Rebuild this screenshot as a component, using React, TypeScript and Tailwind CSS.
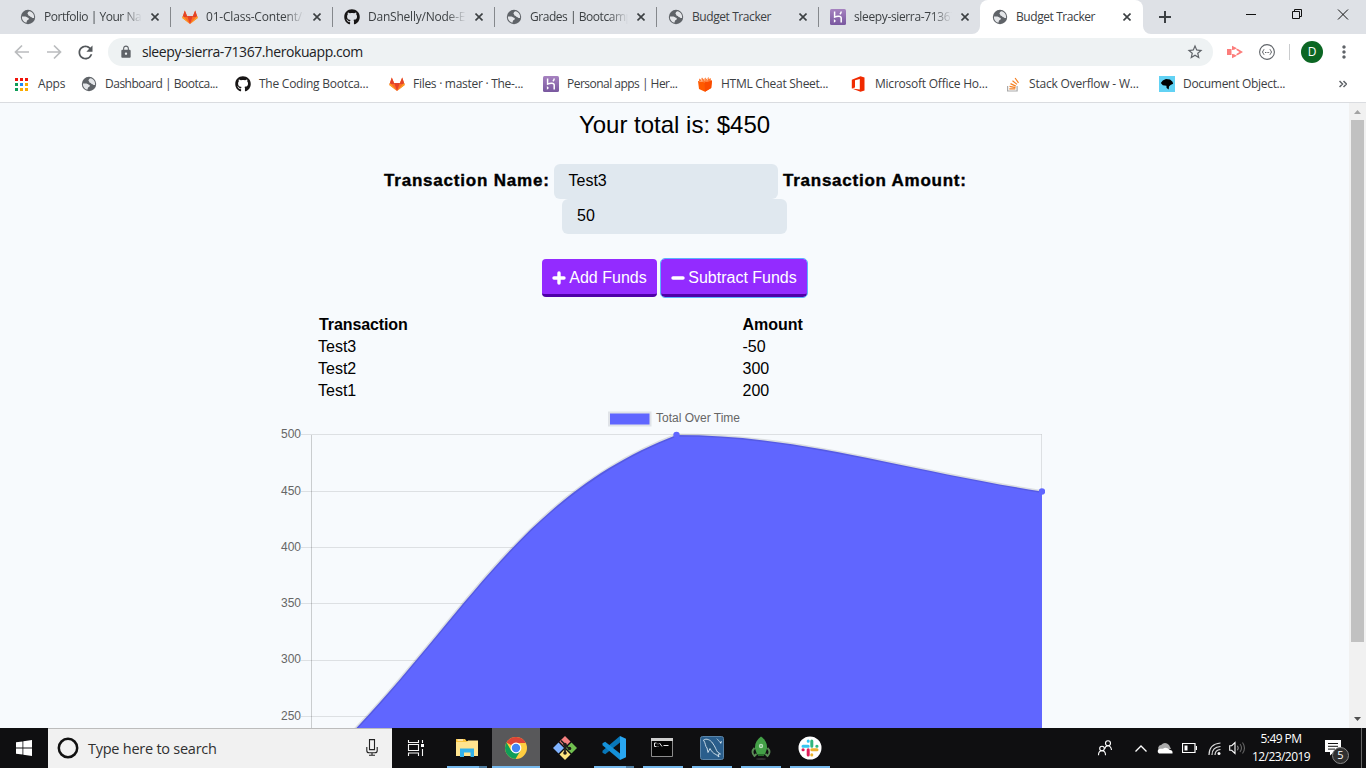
import React from "react";
import { MdLock, MdRefresh, MdStarBorder, MdMoreVert } from "react-icons/md";
import { FaGithub } from "react-icons/fa";

const UI = "font-['Open_Sans','Noto_Sans',sans-serif]";

function GlobeIcon() {
  return (
    <svg viewBox="0 0 16 16" className="h-4 w-4">
      <circle cx="8" cy="8" r="7.200" fill="#5f6368" />
      <path d="M9.300 2.300C7.800 2.700 7.900 4 7.400 4.700 8.400 5.300 8 6.300 9 6.800c1.200.3 1.200 1.500 2.400 1.500.6 0 .8 1 2.700.7C14.500 5.500 12.500 2.800 9.300 2.300z" fill="#e4e6e9" />
      <path d="M1.900 7.400c1.600.3 3.400-.3 4.700.7.900.8 2.400.6 2.300 2-.3 1-1.600.8-1.900 1.700-.3.700-.2 1.500-.7 2C3.500 13 1.700 10.500 1.900 7.400z" fill="#e4e6e9" />
    </svg>
  );
}

function GithubIcon() {
  return <FaGithub className="h-4 w-4 text-[#171515]" />;
}

function GitlabIcon() {
  return (
    <svg viewBox="0 0 16 16" className="h-4 w-4">
      <path d="M8 15 .3 9 2.800 1.500 5.200 7h5.600l2.400-5.500L15.700 9z" fill="#fc6d26" />
      <path d="M2.800 1.500.6 8h4.700zM13.200 1.500 15.400 8h-4.700z" fill="#e24329" />
      <path d="M8 15 .3 9l.6-2zM8 15l7.700-6-.6-2z" fill="#fca326" />
      <path d="M8 15 5.200 7h5.600z" fill="#e24329" />
    </svg>
  );
}

function HerokuIcon() {
  return (
    <svg viewBox="0 0 16 16" className="h-4 w-4">
      <defs>
        <linearGradient id="hk" x1="0" y1="0" x2="0" y2="1">
          <stop offset="0" stopColor="#a682c0" />
          <stop offset="1" stopColor="#79589f" />
        </linearGradient>
      </defs>
      <rect width="16" height="16" rx="1.500" fill="url(#hk)" />
      <path d="M4.600 2.500v5.600c2.200-1 6.600-1.500 6.600 1v4.400M11.200 2.500c0 1.200-.5 2-1.300 2.800" stroke="#fff" strokeWidth="1.500" fill="none" />
      <path d="M3.900 10v3.700L6 11.900z" fill="#fff" />
    </svg>
  );
}

function CheatSheetIcon() {
  return (
    <svg viewBox="0 0 16 16" className="h-4 w-4">
      <path d="m1 5 6.500 1.300L15 4.500 14.200 12 8 15.700 2 13z" fill="#ff5a00" />
      <path d="m7.500 6.200 7.500-1.700-.8 7.500L8 15.700z" fill="#fa4b00" />
      <path d="m2 5 .2-2.500 1.600 1L5 1.500 6.800 3.500l1.500-2 1.300 1.700L11.500 1l.5 2 1.700-1L14 5l-6.500 1.200z" fill="#ff7a32" />
      <path d="m4 2.500 1 2.500M7.800 2.500v2.200M11 2l-1 2.500" stroke="#fff" strokeWidth=".6" />
    </svg>
  );
}

function OfficeIcon() {
  return (
    <svg viewBox="0 0 16 16" className="h-4 w-4">
      <path fillRule="evenodd" d="M.8 3.800 9.500.2 13.500 1.400v13.200L9.500 15.800.8 12.600l8 1V3L4 4.200v7.200l-3.200 1.200z" fill="#f02a00" />
    </svg>
  );
}

function StackIcon() {
  return (
    <svg viewBox="0 0 16 16" className="h-4 w-4" fill="none">
      <path d="M2.600 10v5h9.500v-5" stroke="#a9a9a9" strokeWidth="1.200" />
      <path d="M4.300 12.900h6M4.500 10.400l6 1.200M5.500 7.600l5.300 2.500M7.500 4.700l4.500 3.700M10.100 2l3.400 4.900" stroke="#f48024" strokeWidth="1.200" />
    </svg>
  );
}

function DocumentIcon() {
  return (
    <svg viewBox="0 0 16 16" className="h-4 w-4">
      <path d="M0 0h16v16H0z" fill="#62d2f4" />
      <path d="m1.800 7 2-2.500L7 3l4 .5 2.500 2.300.6 2-2.600 1.200-1.500 1.500-.3 3L7.600 12l-.2-2.200-3.600-.6z" fill="#000" />
    </svg>
  );
}

function AppsIcon() {
  const colors = ["#f0140a", "#f0140a", "#f0140a", "#0f9d58", "#1e88f5", "#fbab00", "#0f9d58", "#fbab00", "#fbab00"];
  return (
    <svg viewBox="0 0 13 13" className="h-[13px] w-[13px]">
      {colors.map((c, i) => (
        <rect key={i} x={(i % 3) * 5} y={Math.floor(i / 3) * 5} width="3" height="3" fill={c} />
      ))}
    </svg>
  );
}

function Cross() {
  return (
    <svg viewBox="0 0 8 8" className="h-2 w-2 shrink-0 text-[#3c4043]">
      <path d="m.5.5 7 7m0-7-7 7" stroke="currentColor" strokeWidth="1.600" />
    </svg>
  );
}

const tabs = [
  { icon: <GlobeIcon />, title: "Portfolio | Your Nam", fade: true, sep: true, spacing: "tracking-[-0.46px]" },
  { icon: <GitlabIcon />, title: "01-Class-Content/19", fade: true, sep: true, spacing: "tracking-[-0.2px]" },
  { icon: <GithubIcon />, title: "DanShelly/Node-Ex", fade: true, sep: true, spacing: "tracking-[-0.22px]" },
  { icon: <GlobeIcon />, title: "Grades | Bootcamp", fade: true, sep: true, spacing: "tracking-[-0.46px]" },
  { icon: <GlobeIcon />, title: "Budget Tracker", fade: false, sep: true, spacing: "tracking-[-0.42px]" },
  { icon: <HerokuIcon />, title: "sleepy-sierra-71367", fade: true, sep: false, spacing: "tracking-[-0.36px]" },
];

function TabStrip() {
  return (
    <div className="flex h-[34px] bg-[#dee1e6] pl-2 text-[12px]">
      {tabs.map((t, i) => (
        <div key={i} className="relative flex h-[34px] w-[162px] shrink-0 items-center pl-3 pr-[11px] text-[#3c4043]">
          <span className="shrink-0">{t.icon}</span>
          <span
            className={
              "ml-2 w-[98px] overflow-hidden whitespace-nowrap " +
              t.spacing +
              (t.fade ? " [mask-image:linear-gradient(to_right,#000_80%,transparent_100%)]" : "")
            }
          >
            {t.title}
          </span>
          <span className="ml-[9px]"><Cross /></span>
          {t.sep && <span className="absolute -right-px top-[7px] h-5 w-px bg-[#85888c]" />}
        </div>
      ))}
      <div className="relative flex h-[34px] w-[163px] shrink-0 items-center rounded-t-lg bg-white pl-3 pr-[11px] text-[#3c4043]">
        <svg viewBox="0 0 8 8" className="absolute -left-2 bottom-0 h-2 w-2"><path d="M8 0v8H0a8 8 0 0 0 8-8" fill="#fff" /></svg>
        <svg viewBox="0 0 8 8" className="absolute -right-2 bottom-0 h-2 w-2"><path d="M0 0v8h8a8 8 0 0 1-8-8" fill="#fff" /></svg>
        <GlobeIcon />
        <span className="ml-2 w-[98px] whitespace-nowrap tracking-[-0.42px]">Budget Tracker</span>
        <span className="ml-[9px]"><Cross /></span>
      </div>
      <svg viewBox="0 0 12 12" className="ml-[16px] mt-[11px] h-3 w-3"><path d="M6 0v12M0 6h12" stroke="#3c4043" strokeWidth="2" /></svg>
      <svg viewBox="0 0 110 12" className="ml-[75px] mt-2 h-3 w-[110px] overflow-visible" fill="none" stroke="#111" strokeWidth="1">
        <path d="M0 6.500h10M46.500 3.500h7v7h-7zM48.500 3.500v-2h7v7h-2M92 1.500l10 10m0-10-10 10" />
      </svg>
    </div>
  );
}

function Toolbar() {
  return (
    <div className="flex h-[36px] items-center bg-white pl-[14px]">
      <svg viewBox="0 0 48 16" className="h-4 w-12" fill="none" stroke="#babcbe" strokeWidth="1.700">
        <path d="M15 8H2M8 1.500 1.500 8 8 14.500M33 8h13M40 1.500 46.500 8 40 14.500" />
      </svg>
      <MdRefresh className="ml-[13px] h-[21px] w-[21px] text-[#54585c]" />
      <div className="ml-3 flex h-7 w-[1105px] items-center rounded-full bg-[#eef2f3] pl-[11px] pr-[9px]">
        <MdLock className="h-[14px] w-[14px] text-[#5f6368]" />
        <span className="mb-px ml-[9px] flex-1 whitespace-nowrap text-[14px] tracking-[-0.42px] text-[#202124]">sleepy-sierra-71367.herokuapp.com</span>
        <MdStarBorder className="h-[18px] w-[18px] text-[#5f6368]" />
      </div>
      <svg viewBox="0 0 16 14" className="ml-[14px] h-[14px] w-4" fill="#fc7d7b">
        <path d="M0 4h4.500v6H0zM5 .8l5 2.400-3 1.600-2 .2zM10.500 3.700 16 7l-5.500 3.300-1.500-1L12.500 7 9 4.700zM5 13.200l5-2.400-3-1.600-2-.2z" />
      </svg>
      <svg viewBox="0 0 16 16" className="ml-[16px] h-4 w-4" fill="none" stroke="#5f6368">
        <circle cx="8" cy="8" r="7.400" strokeWidth="1.100" />
        <path d="M5.300 5.500Q4.300 5.500 4.300 6.600T3.200 8Q4.300 8.300 4.300 9.400T5.300 10.500M10.700 5.500q1 0 1 1.100T12.800 8q-1.100.3-1.100 1.400t-1 1.100" />
        <path d="M6 8.500h1M7.600 8.500h1M9.200 8.500h1" />
      </svg>
      <span className="ml-[14px] h-4 w-px bg-[#caccce]" />
      <span className="ml-[11px] flex h-[22px] w-[22px] items-center justify-center rounded-full bg-[#0b6623] text-[12px] text-white">D</span>
      <MdMoreVert className="ml-[11px] h-[20px] w-[20px] shrink-0 text-[#5f6368]" />
    </div>
  );
}

const bookmarks = [
  { icon: <GlobeIcon />, title: "Dashboard | Bootca...", spacing: "tracking-[-0.5px]" },
  { icon: <GithubIcon />, title: "The Coding Bootca...", spacing: "tracking-[-0.25px]" },
  { icon: <GitlabIcon />, title: "Files · master · The-...", spacing: "tracking-[-0.28px]" },
  { icon: <HerokuIcon />, title: "Personal apps | Her...", spacing: "tracking-[-0.52px]" },
  { icon: <CheatSheetIcon />, title: "HTML Cheat Sheet...", spacing: "tracking-[-0.28px]" },
  { icon: <OfficeIcon />, title: "Microsoft Office Ho...", spacing: "tracking-[-0.23px]" },
  { icon: <StackIcon />, title: "Stack Overflow - W...", spacing: "tracking-[-0.2px]" },
  { icon: <DocumentIcon />, title: "Document Object...", spacing: "tracking-[-0.3px]" },
];

function Bookmarks() {
  return (
    <div className="flex h-[33px] items-start border-b border-[#dadce0] bg-white pl-[15px] text-[12px] text-[#3c4043]">
      <div className="flex h-7 w-[66px] items-center gap-[10px]">
        <AppsIcon />
        <span className="tracking-[-0.2px]">Apps</span>
      </div>
      {bookmarks.map((b) => (
        <div key={b.title} className="flex h-7 w-[154px] shrink-0 items-center gap-2">
          {b.icon}
          <span className={"whitespace-nowrap " + b.spacing}>{b.title}</span>
        </div>
      ))}
      <svg viewBox="0 0 8 8" className="ml-[26px] mt-[10px] h-2 w-2" fill="none" stroke="#5f6368" strokeWidth="1.500">
        <path d="m.5 1 3 3-3 3M4.500 1l3 3-3 3" />
      </svg>
    </div>
  );
}

const rows = [
  ["Test3", "-50"],
  ["Test2", "300"],
  ["Test1", "200"],
];

const ticks = [
  [500, 24.5],
  [450, 81.5],
  [400, 137.5],
  [350, 193.5],
  [300, 250.5],
  [250, 306.5],
];

function Chart() {
  return (
    <svg viewBox="0 0 770 318" className="h-[318px] w-[770px] font-['Liberation_Sans',Arial,sans-serif] text-[12px]">
      <g stroke="#000" strokeOpacity=".1">
        {ticks.map(([v, y]) => (
          <path key={v} d={`M26 ${y}H766.500`} />
        ))}
        <path d="M766.500 24V318" />
      </g>
      <path d="M36.500 25V318" stroke="#000" strokeOpacity=".18" />
      <g fill="#666" textAnchor="end">
        {ticks.map(([v, y]) => (
          <text key={v} x="26" y={y === 250.5 ? 253 : y + 3.5}>{v}</text>
        ))}
      </g>
      <path d="M36 363C182 227.600 233.800 89.200 401.500 25C526 25 620.800 58.400 767 81.500V363z" fill="#6066ff" />
      <path d="M36 363C182 227.600 233.800 89.200 401.500 25C526 25 620.800 58.400 767 81.500" fill="none" stroke="#000" strokeOpacity=".11" strokeWidth="3" />
      <circle cx="401.500" cy="25" r="3.200" fill="#6066ff" />
      <circle cx="767" cy="81.500" r="3.200" fill="#6066ff" />
      <rect x="334" y="2.500" width="41.500" height="13" fill="#6066ff" stroke="#e0e3e8" strokeWidth="2" />
      <text x="381" y="12" fill="#666">Total Over Time</text>
    </svg>
  );
}

function Page() {
  return (
    <div className="flex h-[625px] overflow-hidden bg-[#f7fafd] font-['Liberation_Sans',Arial,sans-serif] text-[16px] text-black">
      <main className="flex w-[1349px] flex-col items-center">
        <h1 className="mt-[4px] h-9 text-[24px] leading-9">Your total is: $450</h1>
        <div className="mt-[21px] flex h-[35px] items-center">
          <b className="w-[170px] whitespace-nowrap pb-[2px] pl-[0.5px] text-[17px] tracking-[0.8px] [-webkit-text-stroke:0.4px_#000]">Transaction Name:</b>
          <div className="flex h-[35px] w-[224px] items-center rounded-md bg-[#e0e8ef] pl-[15px]">
            <span className="-mt-[2px]">Test3</span>
          </div>
          <b className="ml-[5px] w-[183px] whitespace-nowrap pb-[2px] pl-[0.5px] text-[17px] tracking-[0.75px] [-webkit-text-stroke:0.4px_#000]">Transaction Amount:</b>
        </div>
        <div className="flex h-[35px] w-[225px] items-center rounded-md bg-[#e0e8ef] pl-[15px]">
          <span className="-mt-[2px]">50</span>
        </div>
        <div className="mt-[25px] flex gap-1">
          <button className="flex h-[38px] w-[115px] items-center justify-center gap-[3px] whitespace-nowrap rounded border-b-[3px] border-[#4f00a8] bg-[#932bff] pt-[3px] text-white">
            <svg viewBox="0 0 14 14" className="mb-px h-[14px] w-[14px]"><path d="M7 2v10M2 7h10" stroke="#fff" strokeWidth="3.400" strokeLinecap="round" /></svg>
            Add Funds
          </button>
          <button className="flex h-[38px] w-[146px] items-center justify-center gap-[3px] whitespace-nowrap rounded border-b-[3px] border-[#4f00a8] bg-[#932bff] pt-[3px] text-white outline outline-[#5cb0ff]">
            <svg viewBox="0 0 14 14" className="mb-px h-[14px] w-[14px]"><path d="M2 7h10" stroke="#fff" strokeWidth="3.400" strokeLinecap="round" /></svg>
            Subtract Funds
          </button>
        </div>
        <div className="mt-[17px] grid w-[713px] grid-cols-[424px_1fr] leading-[22px]">
          <b className="pl-px tracking-[-0.1px]">Transaction</b>
          <b className="pl-[0.5px]">Amount</b>
          {rows.map(([name, amount]) => (
            <React.Fragment key={name}>
              <span>{name}</span>
              <span className="pl-[0.5px]">{amount}</span>
            </React.Fragment>
          ))}
        </div>
        <div className="mt-2 h-[318px] w-[799px]">
          <Chart />
        </div>
      </main>
      <div className="flex w-[17px] flex-col items-center bg-[#f1f1f1]">
        <svg viewBox="0 0 7 4" className="mt-[7px] h-1 w-[7px]"><path d="M0 4 3.500 0 7 4z" fill="#a3a3a3" /></svg>
        <div className="mt-[6px] h-[522px] w-[13px] bg-[#c1c1c1]" />
        <svg viewBox="0 0 7 4" className="mt-[75px] h-1 w-[7px]"><path d="M0 0h7L3.500 4z" fill="#505050" /></svg>
      </div>
    </div>
  );
}

function FolderIcon() {
  return (
    <svg viewBox="0 0 24 24" className="h-6 w-6">
      <path d="M1 3h9l1.500 2H22v15H1z" fill="#f9c440" />
      <path d="M1 6h11l1-1.500h10V20H1z" fill="#ffe48f" />
      <path d="M2.500 4H8" stroke="#fff" />
      <path d="M5 12.500h14V21h-3.500v-4.500H9V21H5z" fill="#32b1ea" />
    </svg>
  );
}

function ChromeIcon() {
  return (
    <svg viewBox="0 0 24 24" className="h-6 w-6">
      <circle cx="12" cy="12" r="11" fill="#ffcd40" />
      <path d="M12 12 2.500 6.500A11 11 0 0 1 21.700 7H12z" fill="#db4437" />
      <path d="M2.500 6.500A11 11 0 0 0 11.500 23l5-8.500L12 17l-4.800-2.300z" fill="#0f9d58" />
      <circle cx="12" cy="12" r="5.400" fill="#fff" />
      <circle cx="12" cy="12" r="4.200" fill="#4285f4" />
    </svg>
  );
}

function GitIcon() {
  return (
    <svg viewBox="0 0 24 24" className="h-6 w-6">
      <path d="m12 0 5.500 5.400L12 10.900 6.500 5.400z" fill="#f58080" />
      <path d="m5.500 6.500 5.500 5.500-5.500 5.500L0 12z" fill="#80b3ff" />
      <path d="m18.500 6.500L24 12l-5.500 5.500L13 12z" fill="#71c050" />
      <path d="m12 13.100 5.500 5.500L12 24l-5.500-5.400z" fill="#ffe680" />
      <path d="m8 4.500 4 4v8M12 8.500l4 4" stroke="#201c19" strokeWidth="1.700" fill="none" />
      <circle cx="12" cy="8.500" r="1.800" fill="#201c19" /><circle cx="16.500" cy="12.500" r="1.800" fill="#201c19" /><circle cx="12" cy="17" r="1.800" fill="#201c19" />
    </svg>
  );
}

function CodeIcon() {
  return (
    <svg viewBox="0 0 24 24" className="h-6 w-6">
      <path d="m18 0 6 2.800v18.400L18 24z" fill="#29a7f2" />
      <path d="M18 0v6.500L3.200 18.300.5 16.700v-1.900z" fill="#0877b9" />
      <path d="M18 24v-6.500L3.200 5.700.5 7.300v1.900z" fill="#1591d9" />
    </svg>
  );
}

function TerminalIcon() {
  return (
    <svg viewBox="0 0 24 24" className="h-6 w-6">
      <path d="M.5 2.500h21v18H.5z" fill="#050505" stroke="#8c8c8c" />
      <path d="M0 2h22v3H0z" fill="#cfcfcf" />
      <path d="M5.500 7h-2v3.500h2M7 7.500v.8m0 1.700v.6M8.500 7l2.500 3.500M12.500 9.500h5" stroke="#e8e8e8" fill="none" />
    </svg>
  );
}

function WorkbenchIcon() {
  return (
    <svg viewBox="0 0 24 24" className="h-6 w-6">
      <rect x=".5" y=".5" width="23" height="23" rx="2" fill="#2a5e8c" stroke="#5a84a8" />
      <path d="M3.500 4c3-2 7 0 9 3 3 4 3.500 7 5 9l3 2-2.500.2 1 2.800-3-2.500c-3-1-5-4-6-6L8 16.500 7 12C5 10 6 8 3.500 4z" fill="#28587f" stroke="#d5e5f0" strokeWidth=".9" />
      <path d="m16 2 2 1.500L20 6l2-1-1 3-2-2.500z" fill="#dce8f0" />
    </svg>
  );
}

function RobotIcon() {
  return (
    <svg viewBox="0 0 24 24" className="h-6 w-6">
      <path d="M5.500 12c-3 3-2 6 0 8l2-2M18.500 12c3 3 2 6 0 8l-2-2" fill="none" stroke="#5b8d57" strokeWidth="1.800" />
      <path d="M12 .5c4 3 6.500 7 6 12l-2 6H8l-2-6c-.5-5 2-9 6-12z" fill="#43a047" />
      <circle cx="12" cy="10" r="2.200" fill="#b9dfbb" /><circle cx="12" cy="10" r="1" fill="#6fb673" />
      <path d="M9 18h6v2H9z" fill="#286b2b" /><ellipse cx="12" cy="23" rx="5" ry=".8" fill="#3b3b3b" />
    </svg>
  );
}

function SlackIcon() {
  return (
    <svg viewBox="0 0 24 24" className="h-6 w-6" strokeWidth="3" strokeLinecap="round">
      <circle cx="12" cy="12" r="11.500" fill="#fff" />
      <path d="M10.200 5v.2M5 10.200h5.200" stroke="#36c5f0" /><path d="M19 10.200h-.2M13.800 5v5.200" stroke="#2eb67d" />
      <path d="M13.800 19v-.2M13.800 13.800H19" stroke="#ecb22e" /><path d="M5 13.800h.2M10.200 13.800V19" stroke="#e01e5a" />
    </svg>
  );
}

const taskApps = [
  { icon: <FolderIcon />, line: true, multi: true, active: false },
  { icon: <ChromeIcon />, line: true, multi: false, active: true },
  { icon: <GitIcon />, line: false, multi: false, active: false },
  { icon: <CodeIcon />, line: true, multi: true, active: false },
  { icon: <TerminalIcon />, line: true, multi: false, active: false },
  { icon: <WorkbenchIcon />, line: true, multi: false, active: false },
  { icon: <RobotIcon />, line: true, multi: false, active: false },
  { icon: <SlackIcon />, line: true, multi: false, active: false },
];

function Taskbar() {
  return (
    <div className="flex h-10 bg-[#0f0f11] text-white">
      <div className="flex w-12 items-center justify-center">
        <svg viewBox="0 0 16 16" className="h-4 w-4" fill="#fff"><path d="m0 2.300 6.500-.9v6.100H0zM7.300 1.300 16 0v7.500H7.300zM0 8.400h6.500v6.200L0 13.700zM7.300 8.400H16V16l-8.700-1.200z" /></svg>
      </div>
      <div className="flex w-[344px] items-center border-t border-[#bcbcbc] bg-[#f1f1f1] pl-[9px] pr-[14px]">
        <svg viewBox="0 0 22 22" className="mb-px h-[22px] w-[22px]"><circle cx="11" cy="11" r="9.200" fill="none" stroke="#111" strokeWidth="2.500" /></svg>
        <span className="ml-[9px] flex-1 whitespace-nowrap text-[14.500px] tracking-[-0.250px] text-[#303030]">Type here to search</span>
        <svg viewBox="0 0 12 17" className="mb-[2px] h-[17px] w-3" fill="none" stroke="#222" strokeWidth="1.100">
          <path d="M3.500.6h5v10h-5zM.8 8v3.500q0 2.300 2.300 2.300h5.800q2.300 0 2.300-2.300V8M6 14v2M3 16.300h6" />
        </svg>
      </div>
      <div className="flex w-[50px] items-center justify-center pr-[2px]">
        <svg viewBox="0 0 18 16" className="h-4 w-[18px]" fill="none" stroke="#f4f4f4" strokeWidth="1.100">
          <path d="M1.500 0v2.500h10V0M1.500 4.500h10v6h-10zM1.500 16v-3h10v3M15.500 0v3M15.500 9v7" /><path d="M14 4h3v3h-3z" fill="#fff" stroke="none" />
        </svg>
      </div>
      {taskApps.map((a, i) => (
        <div key={i} className="flex w-[49px] justify-center">
          <div className={"relative flex h-10 shrink-0 items-center justify-center " + (a.active ? "w-12 bg-[#58585a]" : "w-10")}>
            {a.icon}
            {a.line && <span className="absolute inset-x-0 bottom-0 h-[2px] bg-[#76b9ed]" />}
            {a.multi && <span className="absolute bottom-0 right-0 h-[2px] w-2 bg-[#4f7da1]" />}
          </div>
        </div>
      ))}
      <div className="ml-auto flex h-10 items-center">
        <svg viewBox="0 0 16 16" className="h-4 w-4" fill="none" stroke="#fff" strokeWidth="1.100">
          <circle cx="11" cy="3.200" r="2.500" /><path d="M7.700 9q.5-3.200 3.300-3.200T14.500 10" /><circle cx="5" cy="8.500" r="2.300" /><path d="M1.500 15.300q0-4.500 3.500-4.500t3.500 4.500" />
        </svg>
        <svg viewBox="0 0 12 7" className="ml-[22px] h-[7px] w-3" fill="none" stroke="#fff" strokeWidth="1.300"><path d="m.5 6.500 5.500-5.500 5.500 5.500" /></svg>
        <svg viewBox="0 0 16 11" className="ml-[10px] h-[11px] w-4"><path d="M2 7a3 3 0 0 1 2-5q4-4 8 0l2 4z" fill="#aaa" /><path d="M2 10.500a2.500 2.500 0 0 1 1-4.700q2-.3 3 0 2-2 4.500-.5L13 7q3 0 2.500 3.500z" fill="#fff" /></svg>
        <svg viewBox="0 0 15 10" className="ml-[9px] h-[10px] w-[15px]" fill="none" stroke="#fff"><path d="M.5.5h12.500v9H.500zM14.500 3v4" strokeWidth="1.200" /><path d="M2.500 2.500h3v5h-3z" fill="#fff" stroke="none" /></svg>
        <svg viewBox="0 0 13 13" className="ml-[11px] h-[13px] w-[13px]" fill="none" stroke="#ddd" strokeWidth="1.200"><path d="M1 13Q1 2 12.500 1M4 13q0-8 8.500-8.500M7 13q0-5 5.500-5.500" /><circle cx="11" cy="11.500" r="1.500" fill="#fff" stroke="none" /></svg>
        <svg viewBox="0 0 17 14" className="ml-2 h-[14px] w-[17px]" fill="none" stroke="#fff" strokeWidth="1.100"><path d="M.7 4.700h2L6 1.500v11L2.700 9.300h-2z" /><path d="M8.500 4.700q1.500 2.300 0 4.600" stroke="#999" /><path d="M11 3q3 4 0 8M13.500 1.500q4 5.500 0 11" stroke="#666" /></svg>
        <div className="ml-[6px] flex w-[58px] flex-col items-center whitespace-nowrap text-[12px] leading-[18px] tracking-[-0.55px]">
          <span>5:49 PM</span>
          <span>12/23/2019</span>
        </div>
        <div className="relative ml-[15px] h-10 w-[41px]">
          <svg viewBox="0 0 16 16" className="absolute left-0 top-3 h-4 w-4"><path d="M0 0h16v12H9l-4 3.500V12H0z" fill="#fff" /><path d="M3 3.500h10M3 6.300h10M3 9.100h7" stroke="#151515" /></svg>
          <span className="absolute left-[7px] top-[19px] flex h-[17px] w-[17px] items-center justify-center rounded-full border border-[#8a8a8a] bg-[#303030] text-[11px]">5</span>
          <span className="absolute bottom-0 right-[4px] top-0 w-px bg-[#666]" />
        </div>
      </div>
    </div>
  );
}

export default function App() {
  return (
    <div className={"flex h-[768px] w-[1366px] flex-col overflow-hidden " + UI}>
      <TabStrip />
      <Toolbar />
      <Bookmarks />
      <Page />
      <Taskbar />
    </div>
  );
}
